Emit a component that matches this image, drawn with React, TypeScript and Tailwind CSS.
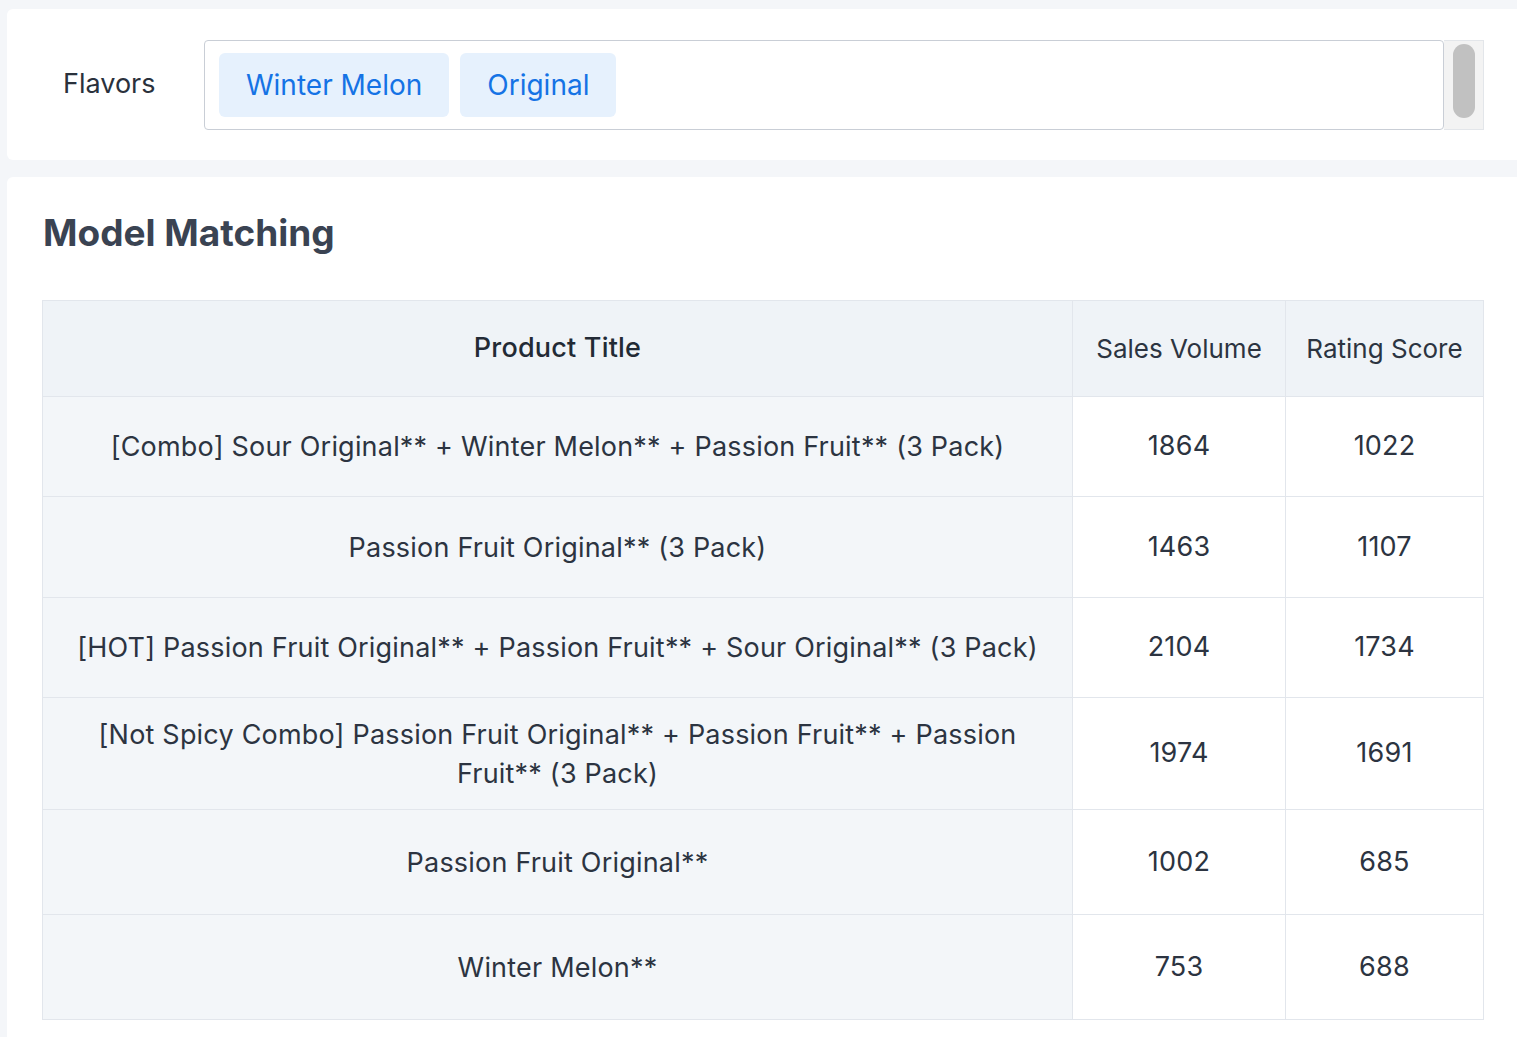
import React from 'react';

const flavors = ['Winter Melon', 'Original'];

const rows = [
  { title: '[Combo] Sour Original** + Winter Melon** + Passion Fruit** (3 Pack)', sales: 1864, rating: 1022, h: 'h-[100px]' },
  { title: 'Passion Fruit Original** (3 Pack)', sales: 1463, rating: 1107, h: 'h-[101px]' },
  { title: '[HOT] Passion Fruit Original** + Passion Fruit** + Sour Original** (3 Pack)', sales: 2104, rating: 1734, h: 'h-[100px]' },
  { title: '[Not Spicy Combo] Passion Fruit Original** + Passion Fruit** + Passion Fruit** (3 Pack)', sales: 1974, rating: 1691, h: 'h-[112px]' },
  { title: 'Passion Fruit Original**', sales: 1002, rating: 685, h: 'h-[105px]' },
  { title: 'Winter Melon**', sales: 753, rating: 688, h: 'h-[105px]' },
];

const App = () => {
  return (
    <div
      className="min-h-screen bg-[#f4f6f9] pl-[7px] pt-[9px] text-[#2c3441]"
      style={{ fontFamily: 'Inter, "Liberation Sans", sans-serif' }}
    >
      {/* flavor filter */}
      <div className="flex h-[151px] items-center rounded-l-md bg-white pl-[56px] pr-[33px]">
        <span className="w-[141px] text-[27px] text-[#2a313c]">Flavors</span>
        <div className="flex h-[90px] flex-1 items-start rounded border border-[#c9ced6] bg-white pl-[14px] pt-[12px]">
          <div className="flex gap-[11px]">
            {flavors.map(f => (
              <span
                key={f}
                className="flex h-[64px] items-center rounded-md bg-[#e6f1fd] px-[27px] text-[28px] text-[#1573e5]"
              >
                {f}
              </span>
            ))}
          </div>
        </div>
        <div className="flex h-[90px] w-[40px] justify-center border-y border-r border-[#e3e6ea] bg-[#f3f3f3] pt-[3px]">
          <div className="h-[74px] w-[22px] rounded-full bg-[#c1c1c1]" />
        </div>
      </div>

      {/* model matching */}
      <div className="mt-[17px] rounded-tl-md bg-white pb-[40px] pl-[35px] pr-[33px] pt-[32px]">
        <h2 className="pl-[1px] text-[37px] font-bold leading-[48px] text-[#3a4352]">Model Matching</h2>
        <table className="mt-[43px] w-full border-collapse text-[27px] tracking-[0.2px]">
          <thead>
            <tr className="h-[96px] bg-[#eff3f7]">
              <th className="w-[1030px] border border-[#e2e6ec] font-medium text-[#222a35]">Product Title</th>
              <th className="w-[213px] border border-[#e2e6ec] text-[26px] font-normal tracking-normal">Sales Volume</th>
              <th className="border border-[#e2e6ec] text-[26px] font-normal tracking-normal">Rating Score</th>
            </tr>
          </thead>
          <tbody>
            {rows.map(r => (
              <tr key={r.title} className={r.h}>
                <td className="border border-[#e2e6ec] bg-[#f3f6f9] px-[20px] text-center leading-[39px]">{r.title}</td>
                <td className="border border-[#e2e6ec] bg-white text-center">{r.sales}</td>
                <td className="border border-[#e2e6ec] bg-white text-center">{r.rating}</td>
              </tr>
            ))}
          </tbody>
        </table>
      </div>
    </div>
  );
};

export default App;
